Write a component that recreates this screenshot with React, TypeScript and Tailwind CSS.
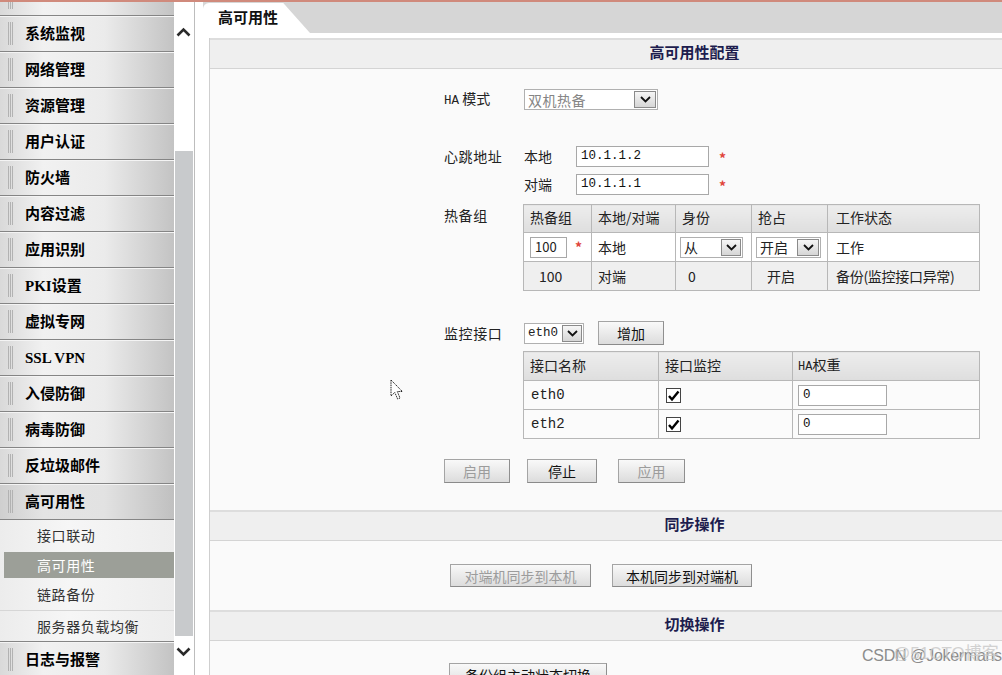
import React from "react";

const SIDE = "font-['Liberation_Serif','Noto_Sans_CJK_SC',serif]";
const MONO = "font-['Liberation_Mono','Noto_Sans_CJK_SC',monospace]";

function Grip({ top = 6 }: { top?: number }) {
  return (
    <div
      className="ml-[8px] w-[6px] shrink-0 bg-[repeating-linear-gradient(90deg,#b2b2b2_0px,#b2b2b2_1px,transparent_1px,transparent_2px)]"
      style={{ marginTop: top, marginBottom: 6 }}
    />
  );
}

function MenuItem({ label, dark }: { label: string; dark?: boolean }) {
  return (
    <div
      className={`flex h-[36px] shrink-0 items-stretch border-b border-b-[#858585] shadow-[inset_0_1px_0_#f4f4f4] ${
        dark
          ? "bg-[linear-gradient(90deg,#cfcfcf_0%,#e4e4e4_25%,#e2e2e2_60%,#c0c0c0_100%)]"
          : "bg-[linear-gradient(90deg,#d9d9d9_0%,#f1f1f1_25%,#ebebeb_60%,#c3c3c3_100%)]"
      }`}
    >
      <Grip />
      <div className={`ml-[11px] flex items-center pt-[1px] text-[15px] font-bold leading-none text-black ${SIDE}`}>{label}</div>
    </div>
  );
}

function SubItem({ label, h, selected, sep, darkSep }: { label: string; h: number; selected?: boolean; sep?: boolean; darkSep?: boolean }) {
  return (
    <div
      className={`flex shrink-0 items-stretch ${sep ? "border-b border-b-[#d6d6d6]" : ""} ${darkSep ? "border-b border-b-[#858585]" : ""}`}
      style={{ height: h }}
    >
      <div
        className={`flex flex-1 items-center text-[14px] tracking-[0.6px] ${
          selected ? "ml-[4px] my-[1px] bg-[#9c9f98] pl-[33px] text-white" : "pl-[37px] text-[#333]"
        }`}
      >
        {label}
      </div>
    </div>
  );
}

function Sidebar() {
  const items = ["系统监视", "网络管理", "资源管理", "用户认证", "防火墙", "内容过滤", "应用识别", "PKI设置", "虚拟专网", "SSL VPN", "入侵防御", "病毒防御", "反垃圾邮件"];
  return (
    <div className="flex w-[174px] shrink-0 flex-col overflow-hidden">
      <div className="flex h-[14px] shrink-0 items-stretch border-b border-b-[#858585] bg-[linear-gradient(90deg,#d9d9d9_0%,#f1f1f1_25%,#ebebeb_60%,#c3c3c3_100%)]">
        <Grip top={0} />
      </div>
      {items.map((l) => (
        <MenuItem key={l} label={l} />
      ))}
      <MenuItem label="高可用性" dark />
      <div className="flex shrink-0 flex-col bg-[linear-gradient(90deg,#ececec_0%,#f6f6f6_40%,#ededed_100%)]">
        <SubItem label="接口联动" h={31} />
        <SubItem label="高可用性" h={28} selected />
        <SubItem label="链路备份" h={32} sep />
        <SubItem label="服务器负载均衡" h={31} darkSep />
      </div>
      <MenuItem label="日志与报警" />
    </div>
  );
}

function ChevUp() {
  return (
    <svg width="15" height="10" viewBox="0 0 15 10">
      <polyline points="1.5,8.5 7.5,2.5 13.5,8.5" fill="none" stroke="#2a2a2a" strokeWidth="2.6" />
    </svg>
  );
}
function ChevDown() {
  return (
    <svg width="15" height="10" viewBox="0 0 15 10">
      <polyline points="1.5,1.5 7.5,7.5 13.5,1.5" fill="none" stroke="#2a2a2a" strokeWidth="2.6" />
    </svg>
  );
}

function Scrollbar() {
  return (
    <div className="flex w-[21px] shrink-0 flex-col border-r border-r-[#bdbdbd] bg-white">
      <div className="flex h-[149px] shrink-0 justify-center pt-[25px] pr-[1px]">
        <ChevUp />
      </div>
      <div className="ml-[1px] h-[485px] w-[18px] shrink-0 bg-[#c8cacc]" />
      <div className="flex flex-1 justify-center pt-[11px] pr-[1px]">
        <ChevDown />
      </div>
    </div>
  );
}

function SmallChev() {
  return (
    <svg width="11" height="7" viewBox="0 0 11 7">
      <polyline points="1,1 5.5,5.5 10,1" fill="none" stroke="#111" strokeWidth="1.8" />
    </svg>
  );
}

function Select({ w, text, arrowW, textCls = "" }: { w: number; text: React.ReactNode; arrowW: number; textCls?: string }) {
  return (
    <div className="flex h-[21px] shrink-0 items-stretch border border-[#b0b0b0] bg-white" style={{ width: w }}>
      <div className={`flex flex-1 items-center pl-[3px] text-[14px] leading-none ${textCls}`}>{text}</div>
      <div
        className="my-[1px] mr-[1px] flex items-center justify-center border border-[#8a8a8a] bg-[linear-gradient(#f6f6f6,#d6d6d6)]"
        style={{ width: arrowW }}
      >
        <SmallChev />
      </div>
    </div>
  );
}

function Input({ w, value }: { w: number; value: string }) {
  return (
    <div
      className={`flex h-[21px] shrink-0 items-center border border-[#a8a8a8] bg-white pl-[4px] text-[12.5px] text-[#111] ${MONO}`}
      style={{ width: w }}
    >
      {value}
    </div>
  );
}

function Star() {
  return <span className="text-[14px] font-bold leading-none text-[#e0443a]">*</span>;
}

function Btn({ w, label, disabled, h = 24 }: { w: number; label: string; disabled?: boolean; h?: number }) {
  return (
    <div
      className={`flex shrink-0 items-center justify-center border border-[#a4a4a4] border-b-[#8a8a8a] border-r-[#8f8f8f] bg-[linear-gradient(#f9f9f9,#dcdcdc)] text-[14px] leading-none ${
        disabled ? "text-[#9c9c9c]" : "text-[#111]"
      }`}
      style={{ width: w, height: h }}
    >
      {label}
    </div>
  );
}

function Check() {
  return (
    <div className="flex h-[15px] w-[15px] items-center justify-center border border-[#444] bg-white">
      <svg width="13" height="13" viewBox="0 0 13 13">
        <polyline points="2,7 5,10.5 11.5,2.5" fill="none" stroke="#000" strokeWidth="2.4" />
      </svg>
    </div>
  );
}

function SecHead({ title }: { title: string }) {
  return (
    <div className="flex h-[31px] shrink-0 items-center justify-center border-t-2 border-t-[#dddddd] border-b border-b-[#d4d4d4] bg-[#efefef] pb-[4px] text-[15px] font-bold text-[#1d1d4e]">
      {title}
    </div>
  );
}

const TH = "border border-[#b7b7b7] bg-[linear-gradient(#ededed,#dedede)] pb-[2px] text-left align-middle font-normal text-[14px] text-[#222]";
const TD = "border border-[#b7b7b7] text-left align-middle text-[14px] text-[#222]";

function HotTable() {
  return (
    <table className="w-[456px] table-fixed border-collapse border border-[#a9a9a9]">
      <colgroup>
        <col style={{ width: 68 }} />
        <col style={{ width: 84 }} />
        <col style={{ width: 76 }} />
        <col style={{ width: 76 }} />
        <col style={{ width: 152 }} />
      </colgroup>
      <tbody>
        <tr className="h-[28px]">
          <th className={`${TH} pl-[6px]`}>热备组</th>
          <th className={`${TH} pl-[6px]`}>本地/对端</th>
          <th className={`${TH} pl-[6px]`}>身份</th>
          <th className={`${TH} pl-[6px]`}>抢占</th>
          <th className={`${TH} pl-[8px]`}>工作状态</th>
        </tr>
        <tr className="h-[29px] bg-white">
          <td className={`${TD} pl-[6px]`}>
            <div className="flex items-center">
              <div className="flex h-[21px] w-[37px] items-center border border-[#a8a8a8] bg-white pl-[4px] text-[13px]">100</div>
              <span className="ml-[8px]">
                <Star />
              </span>
            </div>
          </td>
          <td className={`${TD} pl-[6px]`}>本地</td>
          <td className={`${TD} pl-[4px]`}>
            <Select w={63} arrowW={20} text="从" />
          </td>
          <td className={`${TD} pl-[4px]`}>
            <Select w={65} arrowW={22} text="开启" />
          </td>
          <td className={`${TD} pl-[8px]`}>工作</td>
        </tr>
        <tr className="h-[29px] bg-[#efefef]">
          <td className={`${TD} pl-[15px] text-[13px]`}>100</td>
          <td className={`${TD} pl-[6px]`}>对端</td>
          <td className={`${TD} pl-[12px] text-[13px]`}>0</td>
          <td className={`${TD} pl-[15px]`}>开启</td>
          <td className={`${TD} pl-[8px] tracking-[-0.3px]`}>备份(监控接口异常)</td>
        </tr>
      </tbody>
    </table>
  );
}

function IfTable() {
  return (
    <table className="w-[456px] table-fixed border-collapse border border-[#a9a9a9]">
      <colgroup>
        <col style={{ width: 135 }} />
        <col style={{ width: 134 }} />
        <col style={{ width: 187 }} />
      </colgroup>
      <tbody>
        <tr className="h-[29px]">
          <th className={`${TH} pl-[6px]`}>接口名称</th>
          <th className={`${TH} pl-[6px]`}>接口监控</th>
          <th className={`${TH} pl-[5px]`}>
            <span className={`${MONO} text-[12px]`}>HA</span>权重
          </th>
        </tr>
        {["eth0", "eth2"].map((n) => (
          <tr key={n} className="h-[29px] bg-[#fbfbfb]">
            <td className={`${TD} pl-[7px] ${MONO} text-[12.5px]`}>{n}</td>
            <td className={`${TD} pl-[7px]`}>
              <Check />
            </td>
            <td className={`${TD} pl-[5px]`}>
              <Input w={89} value="0" />
            </td>
          </tr>
        ))}
      </tbody>
    </table>
  );
}

function Panel() {
  return (
    <div className="mt-[5px] flex w-[970px] shrink-0 flex-col border-l border-l-[#cfcfcf]">
      <SecHead title="高可用性配置" />
      <div className="flex h-[441px] shrink-0 flex-col bg-[#fafafa] pl-[234px] pt-[20px]">
        <div className="flex h-[21px] items-center">
          <div className="w-[80px] text-[14px]">
            <span className={`${MONO} text-[12.5px]`}>HA</span> 模式
          </div>
          <Select w={134} arrowW={22} text="双机热备" textCls="text-[#858585] tracking-[0.5px]" />
        </div>

        <div className="mt-[36px] flex">
          <div className="flex h-[21px] w-[80px] items-center text-[14px] tracking-[0.6px]">心跳地址</div>
          <div className="flex flex-col gap-[7px]">
            <div className="flex h-[21px] items-center">
              <div className="w-[52px] text-[14px]">本地</div>
              <Input w={133} value="10.1.1.2" />
              <span className="ml-[10px]">
                <Star />
              </span>
            </div>
            <div className="flex h-[21px] items-center">
              <div className="w-[52px] text-[14px]">对端</div>
              <Input w={133} value="10.1.1.1" />
              <span className="ml-[10px]">
                <Star />
              </span>
            </div>
          </div>
        </div>

        <div className="mt-[9px] flex">
          <div className="w-[79px] pt-[1px] text-[14px] tracking-[0.6px]">热备组</div>
          <HotTable />
        </div>

        <div className="mt-[30px] flex h-[24px] items-center">
          <div className="w-[80px] text-[14px] tracking-[0.6px]">监控接口</div>
          <Select w={60} arrowW={20} text={<span className={`${MONO} text-[12.5px]`}>eth0</span>} />
          <div className="ml-[14px]">
            <Btn w={66} label="增加" />
          </div>
        </div>

        <div className="mt-[6px] ml-[79px]">
          <IfTable />
        </div>

        <div className="mt-[20px] flex">
          <Btn w={66} label="启用" disabled />
          <div className="ml-[17px]">
            <Btn w={70} label="停止" />
          </div>
          <div className="ml-[21px]">
            <Btn w={67} label="应用" disabled />
          </div>
        </div>
      </div>

      <SecHead title="同步操作" />
      <div className="flex h-[69px] shrink-0 bg-[#fafafa] pl-[240px] pt-[23px]">
        <Btn w={141} h={23} label="对端机同步到本机" disabled />
        <div className="ml-[21px]">
          <Btn w={140} h={23} label="本机同步到对端机" />
        </div>
      </div>

      <SecHead title="切换操作" />
      <div className="flex flex-1 bg-[#fafafa] pl-[239px] pt-[22px]">
        <Btn w={158} h={24} label="备份组主动状态切换" />
      </div>
    </div>
  );
}

function TopTabs() {
  return (
    <div className="flex h-[31px] shrink-0">
      <div className="w-[8px] shrink-0 bg-white" />
      <div className="flex flex-1 bg-[#d6d6d6]">
        <div className="mt-[1px] flex h-[30px] w-[107px] shrink-0 items-center rounded-tl-[6px] bg-white pb-[2px] pl-[15px] text-[15px] font-bold text-[#111] [clip-path:polygon(0_0,75%_0,100%_100%,0_100%)]">
          高可用性
        </div>
      </div>
    </div>
  );
}

function Cursor() {
  return (
    <svg className="absolute left-[390px] top-[379px]" width="14" height="22" viewBox="0 0 14 22">
      <path d="M1,1 L1,17 L4.8,13.4 L7.6,20 L10,19 L7.3,12.5 L12.3,12.5 Z" fill="#fff" stroke="#222" strokeWidth="1" strokeDasharray="1.5,0.8" />
    </svg>
  );
}

function Watermark() {
  return (
    <>
      <div className="absolute left-[862px] top-[648px] font-['Liberation_Sans_Narrow','Liberation_Sans',sans-serif] text-[16px] leading-none tracking-[-0.3px] text-[#8c8c8c]">
        CSDN @Jokermans
      </div>
      <div className="absolute left-[893px] top-[645px] font-['Liberation_Sans_Narrow','Liberation_Sans','Noto_Sans_CJK_SC',sans-serif] text-[17px] leading-none text-[#c8c8c8] opacity-80">
        @51CTO博客
      </div>
    </>
  );
}

export default function App() {
  return (
    <div className="relative h-[675px] w-[1002px] overflow-hidden bg-white font-['Noto_Sans_CJK_SC',sans-serif] text-[#222]">
      <div className="h-[2px] bg-[#d08a7c]" />
      <div className="flex h-[673px]">
        <Sidebar />
        <Scrollbar />
        <div className="flex min-w-0 flex-1 flex-col">
          <TopTabs />
          <div className="flex min-h-0 flex-1">
            <div className="w-[14px] shrink-0 bg-white" />
            <Panel />
          </div>
        </div>
      </div>
      <Cursor />
      <Watermark />
    </div>
  );
}
